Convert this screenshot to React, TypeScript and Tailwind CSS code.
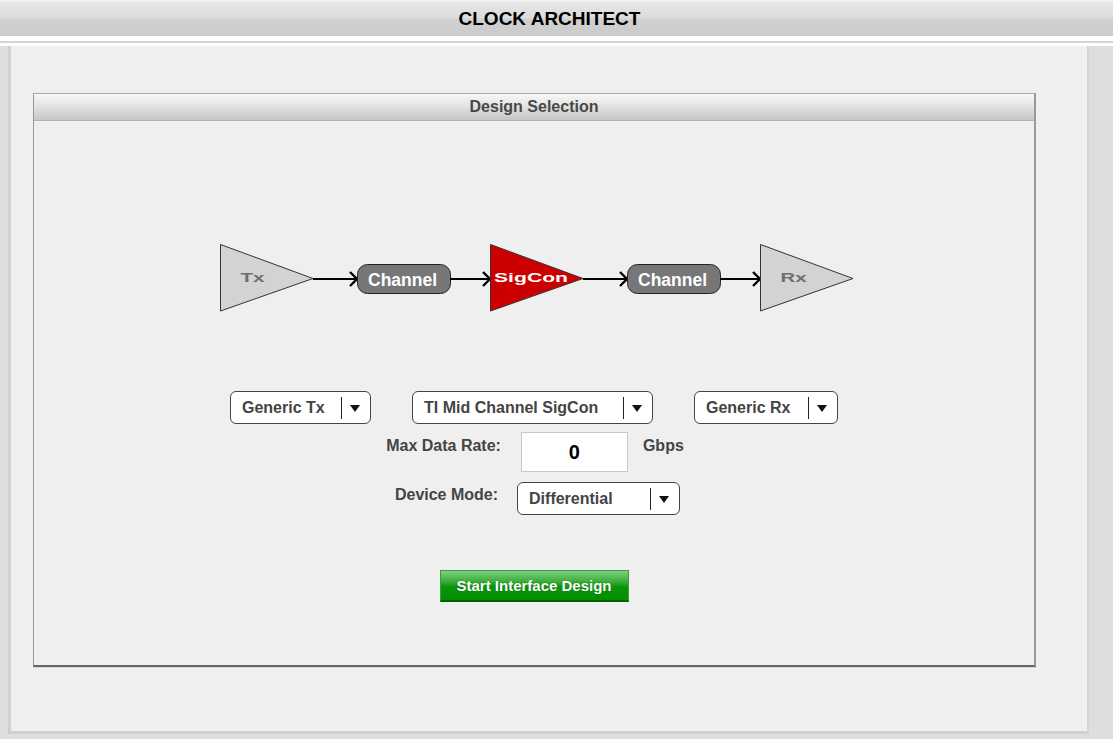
import React from "react";

function Select({ label, width, sep }: { label: string; width: number; sep: number }) {
  return (
    <div
      className="relative h-[33px] rounded-[6px] border border-[#444] bg-white flex items-center shrink-0"
      style={{ width }}
    >
      <span className="pl-[11px] text-[16px] font-bold text-[#444] leading-none whitespace-nowrap">{label}</span>
      <div className="absolute top-[5px] h-[22px] w-px bg-[#222]" style={{ right: sep }} />
      <div className="absolute right-[10px] top-[13px] w-0 h-0 border-l-[5px] border-r-[5px] border-t-[7px] border-l-transparent border-r-transparent border-t-[#111]" />
    </div>
  );
}

function Arrow({ x1, x2 }: { x1: number; x2: number }) {
  return (
    <g stroke="#000" strokeWidth={2} fill="none">
      <line x1={x1} y1={279} x2={x2 - 1} y2={279} />
      <polyline points={`${x2 - 8},272 ${x2 - 1},279 ${x2 - 8},286`} strokeWidth={2.4} />
    </g>
  );
}

function Pill({ x }: { x: number }) {
  return (
    <g>
      <rect x={x + 0.5} y={264.5} width={93} height={29} rx={10} fill="#777" stroke="#222" strokeWidth={1} />
      <text
        x={x + 11}
        y={286}
        fontSize={18}
        fontWeight={700}
        fill="#fff"
        textLength={69}
        lengthAdjust="spacingAndGlyphs"
        fontFamily="'Liberation Sans', Arial, sans-serif"
      >
        Channel
      </text>
    </g>
  );
}

function Tri({ x, fill, label, tx, tl, color }: { x: number; fill: string; label: string; tx: number; tl: number; color: string }) {
  return (
    <g>
      <polygon points={`${x + 0.5},244.5 ${x + 0.5},311 ${x + 93},278.5`} fill={fill} stroke="#333" strokeWidth={1} />
      <text
        x={tx}
        y={281.5}
        fontSize={13}
        fontWeight={700}
        fill={color}
        textLength={tl}
        lengthAdjust="spacingAndGlyphs"
        fontFamily="'Liberation Sans', Arial, sans-serif"
      >
        {label}
      </text>
    </g>
  );
}

export default function App() {
  return (
    <div
      className="w-[1113px] h-[739px] bg-[#dedede] flex flex-col overflow-hidden"
      style={{ fontFamily: "'Liberation Sans', Arial, sans-serif" }}
    >
      {/* Header */}
      <div className="h-[36px] shrink-0 bg-[linear-gradient(#f2f2f2_0%,#f2f2f2_5%,#e6e6e6_7%,#dcdcdc_50%,#d0d0d0_53%,#cccccc_97%,#c4c4c4_100%)] flex items-center justify-center pr-[14px]">
        <span className="text-[19px] font-bold text-black leading-none mt-[1px]">CLOCK ARCHITECT</span>
      </div>
      <div className="h-[5px] shrink-0 bg-white" />
      <div className="h-[2px] shrink-0 bg-[#d3d3d3]" />
      <div className="h-[3px] shrink-0 bg-white" />

      {/* Main panel */}
      <div className="flex-1 flex">
        <div className="ml-[8px] w-[1081px] h-[688px] bg-[#efefef] border-l-[3px] border-r-[2px] border-b-[3px] border-l-[#d0d0d0] border-r-[#d4d4d4] border-b-[#d0d0d0] pl-[22px] pt-[47px]">
          {/* Design Selection box */}
          <div className="w-[1003px] h-[574px] border-t border-l border-t-[#a8a8a8] border-l-[#999] border-r-[2px] border-r-[#999] border-b-[2px] border-b-[#666] shadow-[0_1px_0_#d6d6d6] flex flex-col">
            <div className="h-[27px] shrink-0 bg-[linear-gradient(#f7f7f7,#e6e6e6_40%,#c6c6c6)] border-b border-b-[#b0b0b0] flex items-center justify-center">
              <span className="text-[16px] font-bold text-[#484848] leading-none">Design Selection</span>
            </div>

            {/* Diagram */}
            <svg className="mt-[117px] shrink-0" width={1000} height={80} viewBox="34 238 1000 80">
              <Tri x={220} fill="#d3d3d3" label="Tx" tx={240.5} tl={24} color="#6e6e6e" />
              <Arrow x1={313} x2={358} />
              <Pill x={357} />
              <Arrow x1={450} x2={491} />
              <Tri x={490} fill="#cc0000" label="SigCon" tx={494} tl={74} color="#fff" />
              <Arrow x1={583} x2={628} />
              <Pill x={627} />
              <Arrow x1={720} x2={761} />
              <Tri x={760} fill="#d3d3d3" label="Rx" tx={780.5} tl={26} color="#6e6e6e" />
            </svg>

            {/* Dropdown row */}
            <div className="mt-[73px] flex justify-center gap-[41px]">
              <Select label="Generic Tx" width={141} sep={28} />
              <Select label="TI Mid Channel SigCon" width={241} sep={28} />
              <Select label="Generic Rx" width={144} sep={28} />
            </div>

            {/* Max Data Rate */}
            <div className="mt-[8px] flex justify-center items-start pl-[2px]">
              <span className="mt-[6px] text-[16px] font-bold text-[#444] leading-none whitespace-nowrap">Max Data Rate:</span>
              <div className="ml-[20px] w-[107px] h-[40px] bg-white border border-[#c8c8c8] flex items-center justify-center shrink-0">
                <span className="text-[20px] font-bold text-black leading-none">0</span>
              </div>
              <span className="ml-[15px] mt-[6px] text-[16px] font-bold text-[#444] leading-none">Gbps</span>
            </div>

            {/* Device Mode */}
            <div className="mt-[10px] flex justify-center items-start pl-[7px]">
              <span className="mt-[5px] text-[16px] font-bold text-[#444] leading-none whitespace-nowrap">Device Mode:</span>
              <div className="ml-[19px]">
                <Select label="Differential" width={163} sep={28} />
              </div>
            </div>

            {/* Button */}
            <div className="mt-[55px] flex justify-center">
              <button className="w-[189px] h-[32px] border border-[#3f9a3f] border-b-[#006200] border-b-[2px] bg-[linear-gradient(#7fcf7f_0%,#3fae3f_35%,#0a940a_55%,#008f00_100%)] text-white text-[15px] font-bold leading-none [text-shadow:0_0_1px_#0a5a0a]">
                Start Interface Design
              </button>
            </div>
          </div>
        </div>
      </div>
    </div>
  );
}
